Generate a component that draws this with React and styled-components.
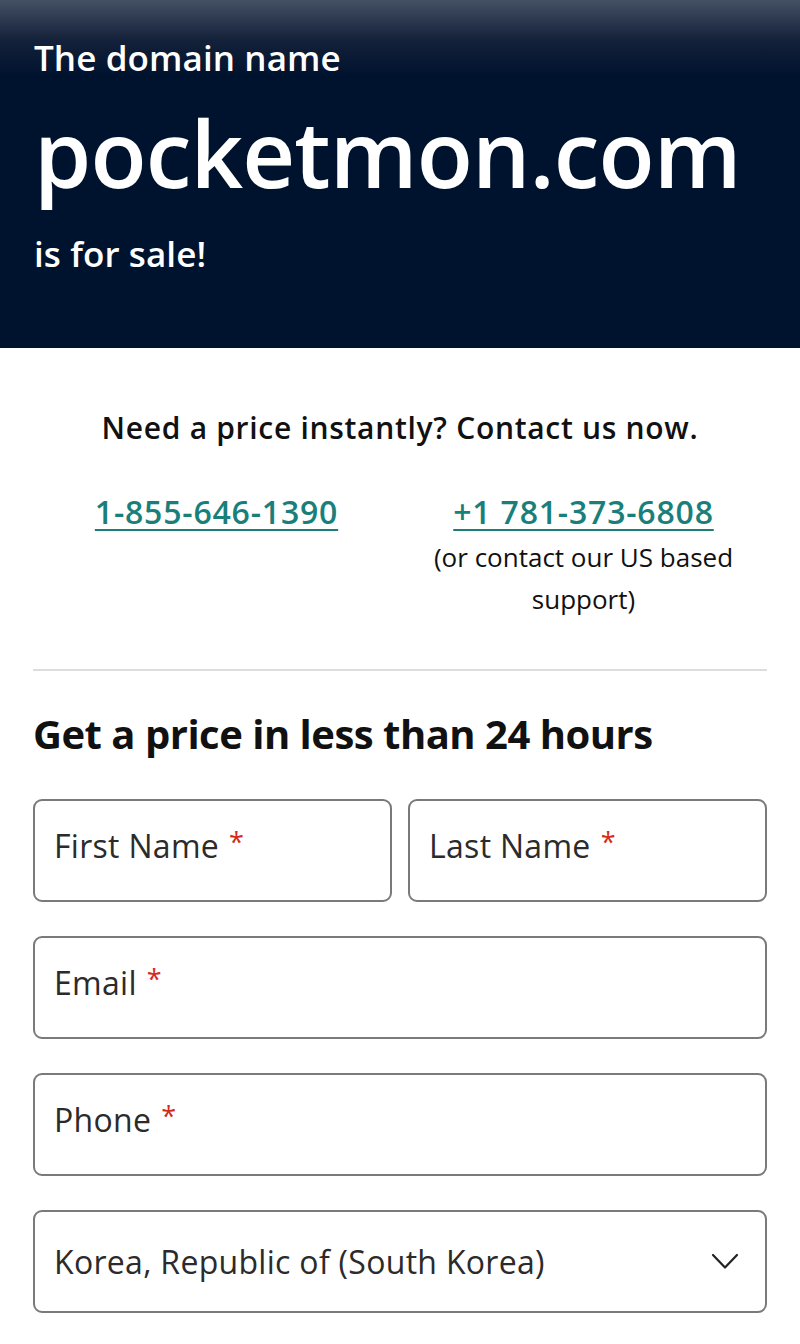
import React from "react";
import styled, { createGlobalStyle } from "styled-components";

const GlobalStyle = createGlobalStyle`
  body {
    margin: 0;
    background: #ffffff;
    font-family: "Open Sans", "Liberation Sans", sans-serif;
    color: #111111;
  }
`;

const Hero = styled.header`
  height: 348px;
  box-sizing: border-box;
  padding: 36px 34px 0;
  background: linear-gradient(180deg, #445064 0px, #14213a 40px, #00132e 75px, #00132e 100%);
  color: #ffffff;
`;

const Kicker = styled.div`
  font-size: 35px;
  font-weight: 600;
  line-height: 44px;
  letter-spacing: 0.1px;
`;

const Domain = styled.h1`
  margin: 18px 0 0;
  font-size: 92px;
  font-weight: 600;
  line-height: 110px;
  letter-spacing: -0.9px;
`;

const Kicker2 = styled(Kicker)`
  margin-top: 24px;
`;

const Body = styled.main`
  padding: 0 33px;
`;

const Contact = styled.section`
  padding-top: 60px;
  padding-bottom: 49px;
  border-bottom: 2px solid #dddddd;
`;

const Lead = styled.p`
  margin: 0;
  text-align: center;
  font-size: 30px;
  font-weight: 600;
  line-height: 40px;
  letter-spacing: 0.7px;
`;

const Phones = styled.div`
  display: grid;
  grid-template-columns: 1fr 1fr;
  margin-top: 44px;
`;

const PhoneCol = styled.div`
  text-align: center;
`;

const PhoneLink = styled.a`
  color: #1a7f7a;
  font-size: 32px;
  font-weight: 600;
  line-height: 40px;
  letter-spacing: 0.8px;
  text-decoration: underline;
  text-underline-offset: 5px;
  text-decoration-thickness: 2px;
`;

const Note = styled.p`
  margin: 4px 0 0;
  font-size: 26px;
  line-height: 42px;
  color: #111111;
`;

const FormTitle = styled.h2`
  margin: 38px 0 40px;
  font-size: 40px;
  font-weight: 700;
  line-height: 50px;
  letter-spacing: -0.5px;
`;

const Form = styled.form`
  display: flex;
  flex-direction: column;
  gap: 34px;
`;

const Row = styled.div`
  display: grid;
  grid-template-columns: 1fr 1fr;
  gap: 16px;
`;

const Field = styled.div`
  height: 103px;
  box-sizing: border-box;
  border: 2px solid #7a7a7a;
  border-radius: 9px;
  padding: ${(p) => (p.$select ? "0 26px 0 19px" : "24px 19px 0")};
  display: flex;
  align-items: ${(p) => (p.$select ? "center" : "flex-start")};
  justify-content: space-between;
  font-size: 32px;
  line-height: 42px;
  letter-spacing: 0.3px;
  color: #2b2b2b;
`;

const Star = styled.span`
  color: #d42a1e;
  margin-left: 10px;
  font-size: 27px;
  vertical-align: top;
  line-height: 34px;
`;

const Chevron = () => (
  <svg width="28" height="17" viewBox="0 0 28 17" fill="none">
    <path d="M2 2 L14 14.5 L26 2" stroke="#222" strokeWidth="2.2" strokeLinecap="round" strokeLinejoin="round" />
  </svg>
);

export default function App() {
  return (
    <>
      <GlobalStyle />
      <Hero>
        <Kicker>The domain name</Kicker>
        <Domain>pocketmon.com</Domain>
        <Kicker2>is for sale!</Kicker2>
      </Hero>
      <Body>
        <Contact>
          <Lead>Need a price instantly? Contact us now.</Lead>
          <Phones>
            <PhoneCol>
              <PhoneLink href="#">1-855-646-1390</PhoneLink>
            </PhoneCol>
            <PhoneCol>
              <PhoneLink href="#">+1 781-373-6808</PhoneLink>
              <Note>(or contact our US based support)</Note>
            </PhoneCol>
          </Phones>
        </Contact>
        <FormTitle>Get a price in less than 24 hours</FormTitle>
        <Form>
          <Row>
            <Field>
              <span>First Name<Star>*</Star></span>
            </Field>
            <Field>
              <span>Last Name<Star>*</Star></span>
            </Field>
          </Row>
          <Field>
            <span>Email<Star>*</Star></span>
          </Field>
          <Field>
            <span>Phone<Star>*</Star></span>
          </Field>
          <Field $select>
            <span>Korea, Republic of (South Korea)</span>
            <Chevron />
          </Field>
        </Form>
      </Body>
    </>
  );
}
